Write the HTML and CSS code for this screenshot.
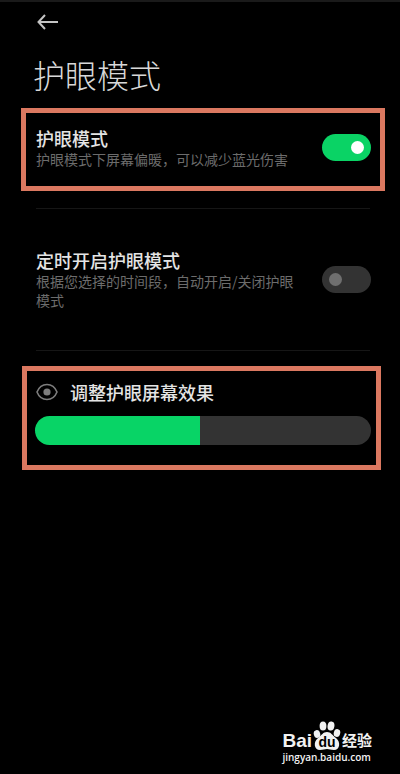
FILE: index.html
```html
<!DOCTYPE html>
<html lang="zh-CN">
<head>
  <meta charset="UTF-8" />
  <meta name="viewport" content="width=device-width, initial-scale=1.0"/>
  <title>护眼模式</title>
  <link rel="stylesheet" href="styles.css">
</head>
<body>
  <header class="page-header">
    <button type="button" class="btn-back" aria-label="返回">
      <svg width="22" height="16" viewBox="0 0 22 16" fill="none" stroke="currentColor" stroke-width="2">
        <path d="M8 1 L1.5 8 L8 15 M2 8 H21"/>
      </svg>
    </button>
    <h1>护眼模式</h1>
  </header>

  <main>
    <!-- Eye care switch -->
    <section class="setting highlight">
      <div class="setting-text">
        <label for="eyeCare">护眼模式</label>
        <p>护眼模式下屏幕偏暖，可以减少蓝光伤害</p>
      </div>
      <input type="checkbox" id="eyeCare" class="switch" checked />
    </section>

    <hr class="divider" />

    <!-- Schedule switch -->
    <section class="setting schedule">
      <div class="setting-text">
        <label for="schedule">定时开启护眼模式</label>
        <p>根据您选择的时间段，自动开启/关闭护眼模式</p>
      </div>
      <input type="checkbox" id="schedule" class="switch" />
    </section>

    <hr class="divider" />

    <!-- Screen effect -->
    <section class="effect highlight">
      <div class="effect-head">
        <svg class="eye" width="22" height="18" viewBox="0 0 22 18">
          <path d="M1 9 C5 -1 17 -1 21 9 C17 19 5 19 1 9 Z" fill="none" stroke="currentColor" stroke-width="1.6"/>
          <circle cx="11" cy="9" r="3.6" fill="currentColor"/>
        </svg>
        <label for="effect">调整护眼屏幕效果</label>
      </div>
      <input type="range" id="effect" class="slider" min="0" max="100" value="49" />
    </section>
  </main>

  <footer class="watermark">
    <div class="brand">
      <span class="brand-bai">Bai</span>
      <span class="paw">
        <svg width="28" height="29" viewBox="0 0 28 29" fill="currentColor">
          <ellipse cx="4" cy="13" rx="3.2" ry="4" transform="rotate(-15 4 13)"/>
          <ellipse cx="10" cy="5" rx="3.4" ry="4.6"/>
          <ellipse cx="18" cy="5" rx="3.4" ry="4.6" transform="rotate(8 18 5)"/>
          <ellipse cx="24" cy="12" rx="3.2" ry="4" transform="rotate(15 24 12)"/>
          <path d="M14 11 C10 11 9 14 5 17 C0 21 1 29 7 29 C10 29 12 28 14 28 C16 28 18 29 21 29 C27 29 28 21 23 17 C19 14 18 11 14 11 Z"/>
        </svg>
        <span class="paw-text">du</span>
      </span>
      <span class="brand-cn">经验</span>
    </div>
    <div class="site">jingyan.baidu.com</div>
  </footer>
</body>
</html>
```
FILE: styles.css
```css
* {
  box-sizing: border-box;
  margin: 0;
  padding: 0;
}

body {
  position: relative;
  min-height: 100vh;
  background: #000;
  border-top: 2px solid #1a1a1a;
  font-family: "Noto Sans CJK SC", sans-serif;
  color: #e4e4e4;
}

.page-header {
  padding: 12px 30px 0 33px;
}

.btn-back {
  display: block;
  height: 16px;
  margin-left: 4px;
  background: none;
  border: none;
  color: #c4c4c4;
  cursor: pointer;
}

.btn-back svg {
  display: block;
}

h1 {
  margin-top: 24px;
  font-size: 32px;
  line-height: 40px;
  font-weight: 300;
  color: #d8d8d8;
}

.highlight {
  border: 5px solid #db7860;
}

.setting {
  display: flex;
  align-items: center;
  justify-content: space-between;
  gap: 20px;
  margin: 0 15px 0 21px;
  padding: 13px 9px 17px 10px;
}

.setting.highlight {
  margin-top: 14px;
}

.setting-text label {
  display: block;
  font-size: 18px;
  line-height: 24px;
  font-weight: 500;
}

.setting-text p {
  font-size: 14px;
  line-height: 19px;
  color: #6c6c6c;
}

.schedule {
  margin: 0 30px 0 36px;
  padding: 39px 0 40px;
}

.schedule .switch {
  margin-right: -1px;
}

.divider {
  height: 1px;
  margin: 0 30px 0 36px;
  border: none;
  background: #161616;
}

.highlight + .divider {
  margin-top: 17px;
}

.switch {
  appearance: none;
  flex: none;
  display: flex;
  align-items: center;
  width: 49px;
  height: 27px;
  padding: 0 7px;
  border-radius: 14px;
  background: #333;
  cursor: pointer;
}

.switch::before {
  content: "";
  width: 13px;
  height: 13px;
  border-radius: 50%;
  background: #6f6f6f;
}

.switch:checked {
  justify-content: flex-end;
  background: #0ad365;
}

.switch:checked::before {
  background: #fff;
}

.effect {
  margin: 15px 19px 0 22px;
  padding: 9px 5px 20px 8px;
}

.effect-head {
  display: flex;
  align-items: center;
  gap: 12px;
  margin-bottom: 12px;
}

.effect-head label {
  font-size: 18px;
  line-height: 24px;
  font-weight: 500;
}

.eye {
  margin-left: 1px;
  color: #7d7d7d;
}

.slider {
  appearance: none;
  display: block;
  width: 100%;
  height: 29px;
  border-radius: 15px;
  background: linear-gradient(to right, #08d466 49%, #333 49%);
  cursor: pointer;
}

.slider::-webkit-slider-thumb {
  appearance: none;
  width: 1px;
  height: 29px;
  background: transparent;
}

/* Logo in the corner */
.watermark {
  position: absolute;
  right: 28px;
  bottom: 10px;
  color: #f2f2f2;
}

.brand {
  display: flex;
  align-items: flex-end;
  gap: 1px;
}

.brand-bai {
  font-family: "Liberation Sans", Arial, sans-serif;
  font-size: 19px;
  line-height: 18px;
  font-weight: bold;
}

.paw {
  position: relative;
  height: 29px;
}

.paw svg {
  display: block;
}

.paw-text {
  position: absolute;
  left: 0;
  right: 0;
  bottom: 1px;
  text-align: center;
  font-family: "Liberation Sans", Arial, sans-serif;
  font-size: 14px;
  line-height: 14px;
  font-weight: bold;
  color: #000;
}

.brand-cn {
  font-size: 15px;
  line-height: 20px;
  font-weight: bold;
}

.site {
  font-family: "Open Sans", sans-serif;
  font-size: 10px;
  line-height: 14px;
  font-weight: 600;
}
```
